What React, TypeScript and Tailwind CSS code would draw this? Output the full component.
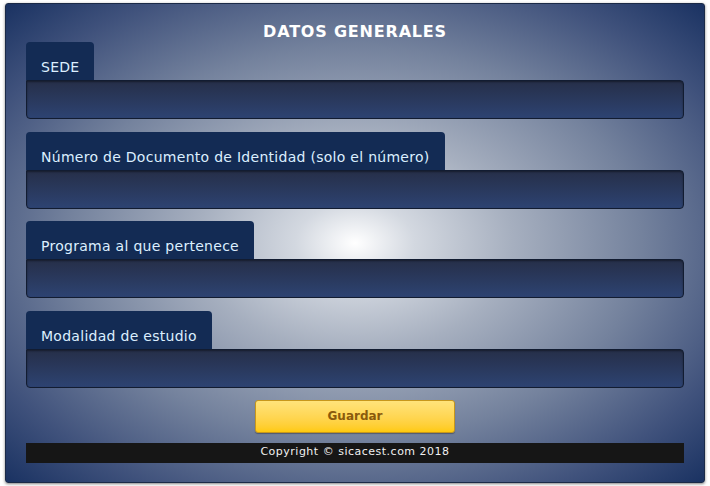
import React from 'react';

const fields = [
  'SEDE',
  'Número de Documento de Identidad (solo el número)',
  'Programa al que pertenece',
  'Modalidad de estudio',
];

export default function App() {
  return (
    <div className="w-[710px] h-[486px] bg-white pt-[3px] pl-[5px] font-['DejaVu_Sans',sans-serif]">
      <div className="w-[700px] h-[480px] rounded-[3px] border border-[#1b2a47] shadow-[0_1px_3px_rgba(0,0,0,0.5)] px-[20px] bg-[radial-gradient(ellipse_at_50%_50%,#ffffff_0%,#d3d8e0_12%,#a6afbf_32%,#74829d_58%,#40527c_82%,#1a3262_100%)]">
        {/* Title */}
        <div className="pt-[18px] leading-[20px] text-center text-white font-bold text-[16px] tracking-[0.8px]">
          DATOS GENERALES
        </div>

        {/* Fields */}
        <div className="flex flex-col gap-[12.5px]">
          {fields.map((label) => (
            <div key={label} className="flex flex-col items-start">
              <div className="h-[38px] px-[15px] pt-[17px] rounded-t-[4px] bg-[#132b54] text-[14px] leading-[16px] tracking-[0.28px] text-[#dcefff] whitespace-nowrap">
                {label}
              </div>
              <div className="w-full h-[39px] rounded-b-[4px] rounded-tr-[4px] border border-[#121c31] bg-gradient-to-b from-[#262f49] to-[#2d4372] shadow-[inset_0_1px_2px_rgba(0,0,0,0.4)]" />
            </div>
          ))}
        </div>

        {/* Save button */}
        <div className="flex justify-center mt-[12px]">
          <button className="w-[200px] h-[33px] rounded-[3px] border border-[#c7971b] bg-gradient-to-b from-[#ffe37a] to-[#ffca08] text-[12px] font-bold text-[#8a5a0c] shadow-[0_1px_1px_rgba(0,0,0,0.3)]">
            Guardar
          </button>
        </div>

        {/* Footer */}
        <div className="mt-[10px] h-[20px] bg-[#161616] flex items-center justify-center text-[11px] tracking-[0.5px] text-[#f0f0f0]">
          Copyright © sicacest.com 2018
        </div>
      </div>
    </div>
  );
}
